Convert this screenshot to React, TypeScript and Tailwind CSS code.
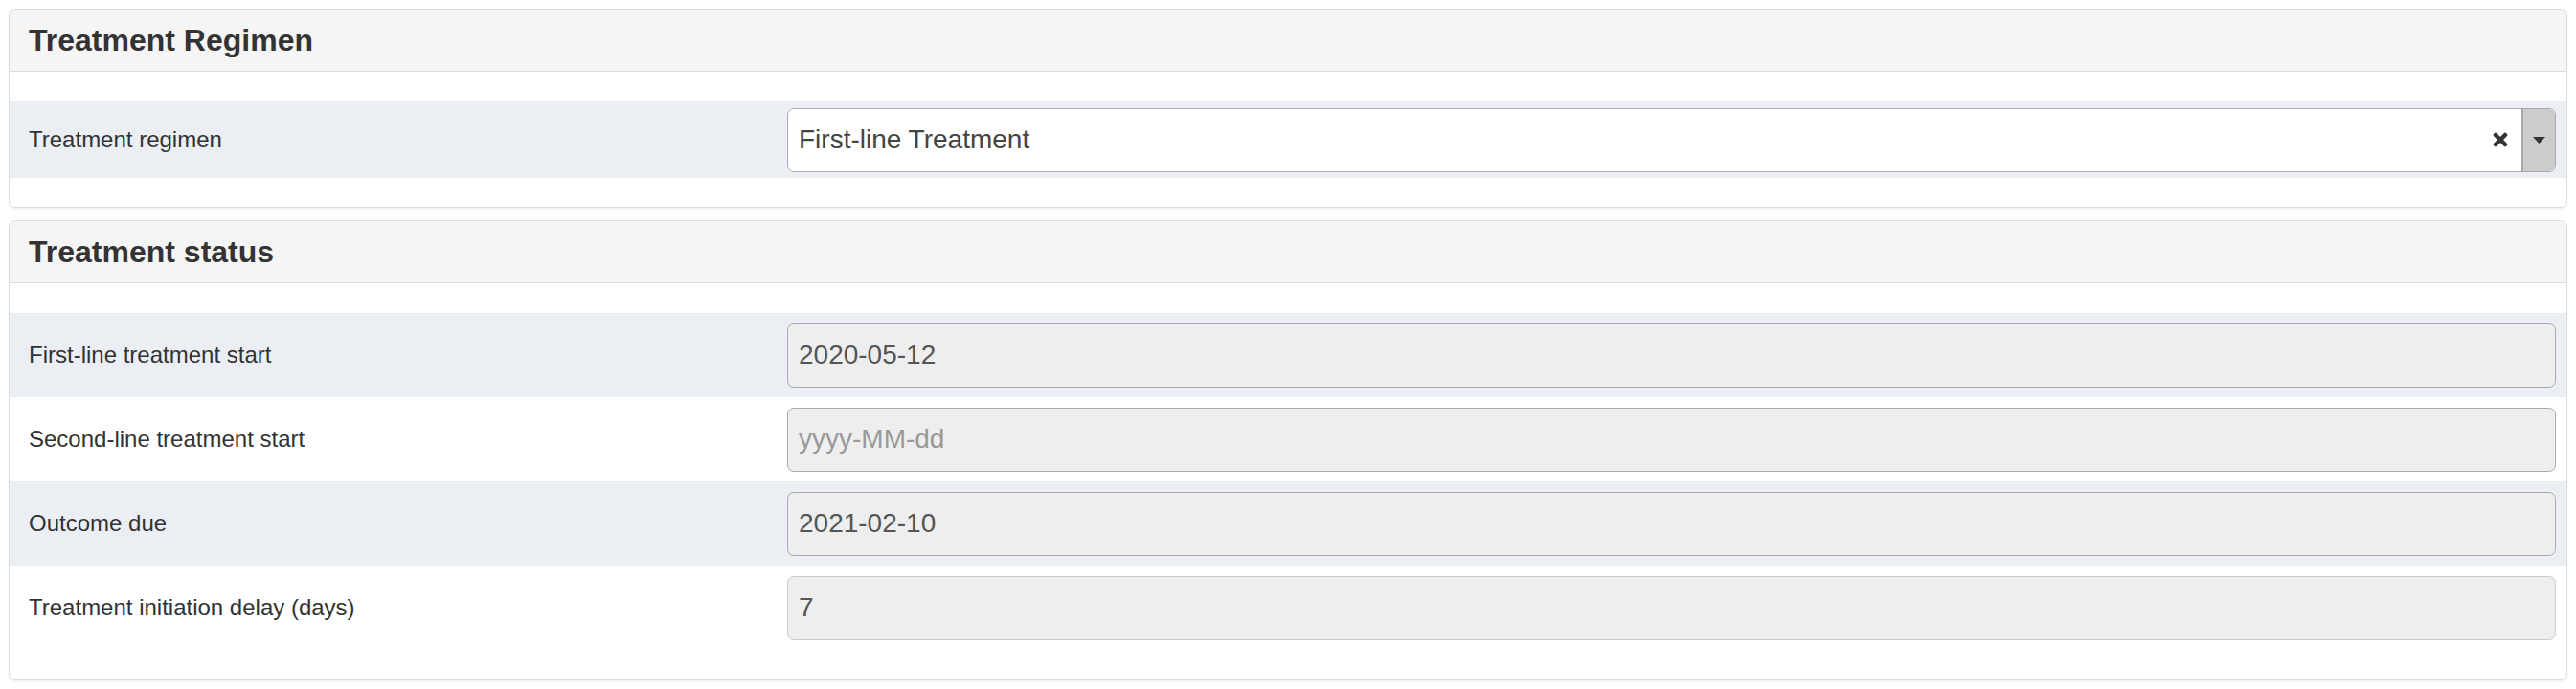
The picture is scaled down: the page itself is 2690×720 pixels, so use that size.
import React from "react"

type Field = { label: string; value?: string; placeholder?: string; soft?: boolean }

const STATUS_FIELDS: Field[] = [
  { label: "First-line treatment start", value: "2020-05-12" },
  { label: "Second-line treatment start", placeholder: "yyyy-MM-dd" },
  { label: "Outcome due", value: "2021-02-10" },
  { label: "Treatment initiation delay (days)", value: "7", soft: true },
]

const Panel: React.FC<{ title: string; children: React.ReactNode; className?: string }> = ({ title, children, className }) => (
  <div className={`border border-[#dddddd] rounded-[7px] bg-white shadow-[0_2px_2px_rgba(0,0,0,0.05)] overflow-hidden ${className ?? ""}`}>
    <div className="h-[65px] bg-[#f5f5f5] border-b border-[#dddddd] flex items-center pl-[20px]">
      <h3 className="text-[32px] leading-none font-bold text-[#333333] pb-[1px]">{title}</h3>
    </div>
    {children}
  </div>
)

const Label: React.FC<{ text: string }> = ({ text }) => (
  <div className="w-[812px] shrink-0 pl-[20px] text-[24px] text-[#333333]">{text}</div>
)

export default function App() {
  return (
    <div className="min-h-[720px] bg-white px-[9px] pt-[9px] font-['Liberation_Sans',Arial,sans-serif]">
      <Panel title="Treatment Regimen">
        <div className="pt-[31px] pb-[30px]">
          <div className="h-[80px] bg-[#ebeef2] flex items-center pr-[11px]">
            <Label text="Treatment regimen" />
            <div className="flex-1 h-[67px] bg-white border border-[#aaaaaa] rounded-[7px] flex items-stretch overflow-hidden">
              <div className="flex-1 flex items-center pl-[11px] text-[28px] text-[#444444]">First-line Treatment</div>
              <div className="w-[44px] flex items-center justify-center">
                <svg width="16" height="16" viewBox="0 0 16 16">
                  <path d="M3 3 L13 13 M13 3 L3 13" stroke="#333333" strokeWidth="4.5" strokeLinecap="round" />
                </svg>
              </div>
              <div className="w-[35px] bg-[#cccccc] border-l-2 border-[#aaaaaa] flex items-center justify-center">
                <svg width="13" height="7" viewBox="0 0 13 7">
                  <path d="M0 0 L13 0 L6.5 7 Z" fill="#333333" />
                </svg>
              </div>
            </div>
          </div>
        </div>
      </Panel>

      <Panel title="Treatment status" className="mt-[13px]">
        <div className="pt-[31px] pb-[31px]">
          {STATUS_FIELDS.map((f, i) => (
            <div key={f.label} className={`h-[88px] flex items-center pr-[11px] ${i % 2 === 0 ? "bg-[#ebeef2]" : "bg-white"}`}>
              <Label text={f.label} />
              <div className={`flex-1 h-[67px] bg-[#eeeeee] border rounded-[7px] flex items-center pl-[11px] text-[28px] ${f.soft ? "border-[#cccccc]" : "border-[#aaaaaa]"} ${f.value ? "text-[#555555]" : "text-[#999999]"}`}>
                {f.value ?? f.placeholder}
              </div>
            </div>
          ))}
        </div>
      </Panel>
    </div>
  )
}
